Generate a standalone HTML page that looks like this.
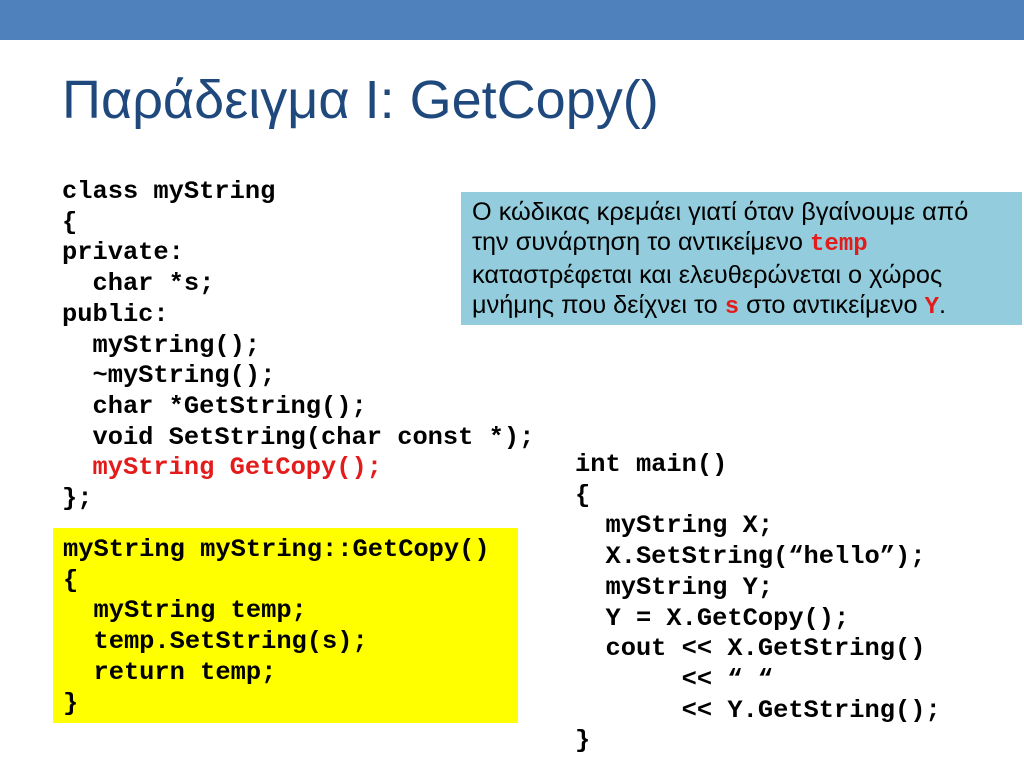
<!DOCTYPE html>
<html><head><meta charset="utf-8"><style>
body{margin:0;width:1024px;height:768px;background:#fff;position:relative;overflow:hidden;font-family:"Liberation Sans",sans-serif}
.bar{position:absolute;left:0;top:0;width:1024px;height:40px;background:#4F81BD}
h1{position:absolute;left:62px;top:68px;margin:0;font-weight:normal;font-size:54px;line-height:64px;color:#1F497D;white-space:nowrap}
pre{margin:0;font-family:"Liberation Mono",monospace;font-weight:bold;font-size:25.4px;line-height:30.7px;color:#000;position:absolute}
.r{color:#E41B1B}
.note{position:absolute;left:461px;top:192px;width:561px;height:133px;background:#93CDDD;box-sizing:border-box;padding:5px 11px;font-size:25.3px;line-height:30px;color:#000;white-space:nowrap}
.note code{font-family:"Liberation Mono",monospace;font-weight:bold;color:#E41B1B;font-size:24px}
.yel{position:absolute;left:53px;top:528px;width:465px;height:195px;background:#FFFF00}
</style></head><body>
<div class="bar"></div>
<h1>Παράδειγμα I: GetCopy()</h1>
<pre style="left:62px;top:177px">class myString
{
private:
  char *s;
public:
  myString();
  ~myString();
  char *GetString();
  void SetString(char const *);
  <span class="r">myString GetCopy();</span>
};</pre>
<div class="note">Ο κώδικας κρεμάει γιατί όταν βγαίνουμε από<br>την συνάρτηση το αντικείμενο <code>temp</code><br>καταστρέφεται και ελευθερώνεται ο χώρος<br>μνήμης που δείχνει το <code>s</code> στο αντικείμενο <code>Y</code>.</div>
<div class="yel"></div>
<pre style="left:63px;top:535px">myString myString::GetCopy()
{
  myString temp;
  temp.SetString(s);
  return temp;
}</pre>
<pre style="left:575px;top:450px">int main()
{
  myString X;
  X.SetString(“hello”);
  myString Y;
  Y = X.GetCopy();
  cout &lt;&lt; X.GetString()
       &lt;&lt; “ “
       &lt;&lt; Y.GetString();
}</pre>
</body></html>
